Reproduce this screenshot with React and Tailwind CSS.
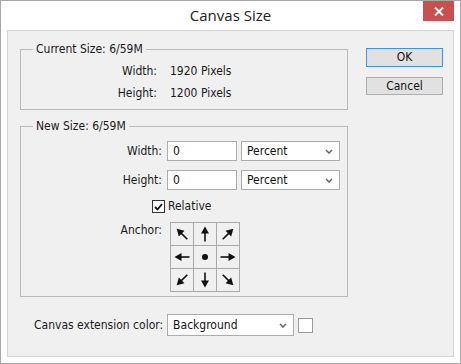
import React from "react";

const FONT = { fontFamily: '"DejaVu Sans Condensed", Tahoma, "Liberation Sans", sans-serif' };

function Arrow({ angle }) {
  return (
    <svg width="22" height="22" viewBox="0 0 22 22">
      <g transform={`rotate(${angle} 11 11)`}>
        <line x1="3.5" y1="11" x2="13" y2="11" stroke="#111" strokeWidth="1.6" />
        <polygon points="11.5,7 18.5,11 11.5,15" fill="#111" />
      </g>
    </svg>
  );
}

function Chevron() {
  return (
    <svg width="8" height="5" viewBox="0 0 8 5">
      <path d="M1 1 L4 4 L7 1" fill="none" stroke="#666" strokeWidth="1.5" />
    </svg>
  );
}

function Select({ value, w, h }) {
  return (
    <div className={`${w} ${h} bg-white border border-[#acacac] flex items-center justify-between pl-[5px] pr-[6px] text-[#111]`}>
      <span>{value}</span>
      <Chevron />
    </div>
  );
}

function Input({ value }) {
  return (
    <div className="w-[70px] h-[20px] bg-white border border-[#abadb3] flex items-center pl-[5px] text-[#111]">
      {value}
    </div>
  );
}

const cells = [
  { a: -135 }, { a: -90 }, { a: -45 },
  { a: 180 }, { dot: true }, { a: 0 },
  { a: 135 }, { a: 90 }, { a: 45 },
];

export default function App() {
  return (
    <div className="w-[461px] h-[364px] bg-white border border-[#a8a8a8] relative text-[12px] leading-[15px] text-[#1a1a1a]" style={FONT}>
      <div className="h-[29px] flex items-center justify-center text-[15px] text-[#222]" style={{ fontFamily: '"Open Sans", "Noto Sans", sans-serif' }}>
        Canvas Size
      </div>
      <div className="absolute right-[6px] top-0 w-[31px] h-[20px] bg-[#c75050] flex items-center justify-center">
        <svg width="10" height="9" viewBox="0 0 10 9">
          <path d="M1 0.5 L9 8.5 M9 0.5 L1 8.5" stroke="#fff" strokeWidth="2" />
        </svg>
      </div>
      <div className="ml-[6px] w-[447px] h-[327px] border border-[#d4d4d4] bg-[#f0f0f0] flex flex-col">
        <div className="flex">
          <div className="pl-[12px] pt-[11px] flex flex-col">
            <fieldset className="w-[328px] h-[68px] border border-[#b9b9b9] pl-[12px]">
              <legend className="px-[3px]">Current Size: 6/59M</legend>
              <div className="-ml-[12px] pt-[3px] grid grid-cols-[136px_auto] gap-x-[13px]">
                <div className="h-[22px] flex items-center justify-end">Width:</div>
                <div className="h-[22px] flex items-center">1920 Pixels</div>
                <div className="h-[22px] flex items-center justify-end">Height:</div>
                <div className="h-[22px] flex items-center">1200 Pixels</div>
              </div>
            </fieldset>
            <fieldset className="mt-[9px] w-[328px] h-[178px] border border-[#b9b9b9] pl-[12px]">
              <legend className="px-[3px]">New Size: 6/59M</legend>
              <div className="-ml-[12px] pt-[7px] flex flex-col">
                <div className="flex items-center">
                  <div className="w-[141px] text-right">Width:</div>
                  <div className="ml-[5px]"><Input value="0" /></div>
                  <div className="ml-[4px]"><Select value="Percent" w="w-[99px]" h="h-[20px]" /></div>
                </div>
                <div className="flex items-center mt-[9px]">
                  <div className="w-[141px] text-right">Height:</div>
                  <div className="ml-[5px]"><Input value="0" /></div>
                  <div className="ml-[4px]"><Select value="Percent" w="w-[99px]" h="h-[20px]" /></div>
                </div>
                <div className="flex items-center mt-[9px] pl-[131px]">
                  <div className="w-[13px] h-[13px] bg-white border border-[#333] flex items-center justify-center">
                    <svg width="9" height="8" viewBox="0 0 9 8">
                      <path d="M1 4 L3.5 6.5 L8 1" fill="none" stroke="#111" strokeWidth="1.8" />
                    </svg>
                  </div>
                  <span className="ml-[3px]">Relative</span>
                </div>
                <div className="flex items-start mt-[8px]">
                  <div className="w-[141px] text-right pt-[1px]">Anchor:</div>
                  <div className="ml-[8px] grid grid-cols-[22px_22px_22px] gap-[1px] bg-[#a9a9a9] p-[1px]">
                    {cells.map((c, i) => (
                      <div key={i} className="w-[22px] h-[22px] bg-[#f0f0f0] flex items-center justify-center">
                        {c.dot ? <div className="w-[6px] h-[6px] rounded-full bg-[#111]" /> : <Arrow angle={c.a} />}
                      </div>
                    ))}
                  </div>
                </div>
              </div>
            </fieldset>
          </div>
          <div className="ml-[18px] pt-[17px] flex flex-col">
            <div className="w-[77px] h-[19px] bg-[#e1e1e1] border border-[#3c94e6] flex items-center justify-center text-[#111]">OK</div>
            <div className="mt-[10px] w-[77px] h-[18px] bg-[#e1e1e1] border border-[#adadad] flex items-center justify-center text-[#111]">Cancel</div>
          </div>
        </div>
        <div className="mt-[17px] pl-[26px] flex items-center">
          <span>Canvas extension color:</span>
          <div className="ml-[4px]"><Select value="Background" w="w-[127px]" h="h-[22px]" /></div>
          <div className="ml-[4px] w-[15px] h-[15px] bg-white border border-[#9a9a9a]" />
        </div>
      </div>
    </div>
  );
}
